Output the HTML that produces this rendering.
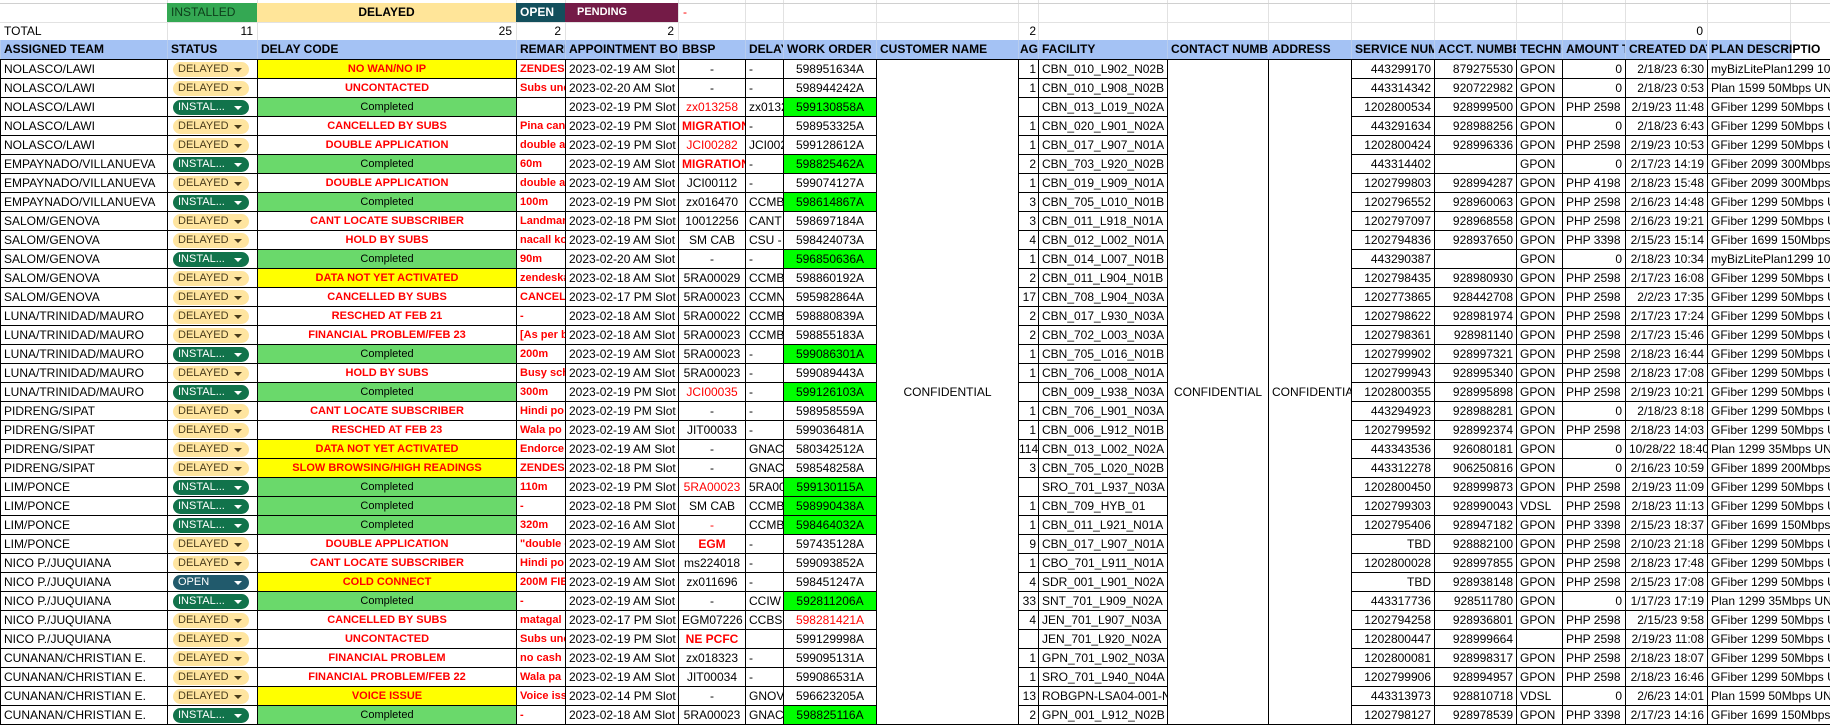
<!DOCTYPE html>
<html><head><meta charset="utf-8">
<style>
*{box-sizing:border-box}
body{margin:0;width:1830px;height:720px;overflow:hidden;background:#fff;font-family:"Liberation Sans",Arial,sans-serif;font-size:12px;color:#000;position:relative}
.top{position:absolute;left:0;top:0;width:1830px;height:40px}
.tc{position:absolute;height:19px;line-height:19px;font-size:12px;padding:0 4px;white-space:nowrap;overflow:hidden}
.vl{position:absolute;top:0;width:1px;height:40px;background:#e2e2e2}
table{position:absolute;left:0;top:40px;border-collapse:collapse;table-layout:fixed;width:1830px}
tr{height:19px}
td{border:1px solid #000;padding:0 3px;white-space:nowrap;overflow:hidden;line-height:16px;font-size:12px;height:19px}
tr.h td{background:#a4c2f4;font-weight:bold;font-size:12px;border-left:1px solid #b8cdee;border-right:1px solid #b8cdee;border-top:none;border-bottom:1px solid #000;height:18px;padding:0 3px}
.c{text-align:center}.n{text-align:right}
.dc{text-align:center;color:#f00;font-weight:bold;font-size:11px}
.y{background:#ffff00}
.g{background:#6ad96b;color:#000;font-weight:normal;font-size:11px}
.rm{color:#f00;font-weight:bold;font-size:11px}
.rd{color:#f00}
.bg{background:#00ff00}
.ch{display:inline-block;width:76px;height:15px;line-height:15px;border-radius:8px;font-size:11px;padding-left:5px;position:relative;vertical-align:middle;margin-left:5px;letter-spacing:0}
.ch:after{content:"";position:absolute;right:7px;top:6px;border-left:4px solid transparent;border-right:4px solid transparent;border-top:4px solid currentColor}
.D{background:#ffe5a0;color:#4a3c1c}
.I{background:#11734b;color:#fff}
.O{background:#215a6c;color:#fff}
td.s{padding:0}
td.m{text-align:center;vertical-align:middle;border-top:1px solid #000}
</style></head><body>
<div class="top">
<div class="vl" style="left:167px"></div><div class="vl" style="left:257px"></div><div class="vl" style="left:516px"></div><div class="vl" style="left:565px"></div><div class="vl" style="left:678px"></div><div class="vl" style="left:745px"></div><div class="vl" style="left:783px"></div><div class="vl" style="left:876px"></div><div class="vl" style="left:1018px"></div><div class="vl" style="left:1038px"></div><div class="vl" style="left:1167px"></div><div class="vl" style="left:1268px"></div><div class="vl" style="left:1351px"></div><div class="vl" style="left:1434px"></div><div class="vl" style="left:1516px"></div><div class="vl" style="left:1562px"></div><div class="vl" style="left:1625px"></div><div class="vl" style="left:1707px"></div><div class="vl" style="left:1790px"></div>
<div style="position:absolute;left:0;top:3px;width:1830px;height:1px;background:#d0d0d0"></div>
<div style="position:absolute;left:0;top:22px;width:1830px;height:1px;background:#e2e2e2"></div>
<div class="tc" style="left:167px;top:3px;width:90px;background:#34a853;color:#0d3d1a">INSTALLED</div>
<div class="tc" style="left:257px;top:3px;width:259px;background:#ffe599;text-align:center;font-weight:bold">DELAYED</div>
<div class="tc" style="left:516px;top:3px;width:49px;background:#134f5c;color:#fff;font-weight:bold">OPEN</div>
<div class="tc" style="left:565px;top:3px;width:113px;background:#741b47;color:#fff;font-weight:bold;font-size:11px;padding-left:12px">PENDING</div>
<div class="tc" style="left:679px;top:3px;color:#f00">-</div>
<div class="tc" style="left:0;top:22px;">TOTAL</div>
<div class="tc" style="left:167px;top:22px;width:90px;text-align:right">11</div>
<div class="tc" style="left:257px;top:22px;width:259px;text-align:right">25</div>
<div class="tc" style="left:516px;top:22px;width:49px;text-align:right">2</div>
<div class="tc" style="left:565px;top:22px;width:113px;text-align:right">2</div>
<div class="tc" style="left:1018px;top:22px;width:20px;text-align:right;padding:0 2px">2</div>
<div class="tc" style="left:1625px;top:22px;width:82px;text-align:right">0</div>
</div>
<table>
<colgroup><col style="width:167px"><col style="width:90px"><col style="width:259px"><col style="width:49px"><col style="width:113px"><col style="width:67px"><col style="width:38px"><col style="width:93px"><col style="width:142px"><col style="width:20px"><col style="width:129px"><col style="width:101px"><col style="width:83px"><col style="width:83px"><col style="width:82px"><col style="width:46px"><col style="width:63px"><col style="width:82px"><col style="width:123px"></colgroup>
<tr class="h"><td>ASSIGNED TEAM</td><td>STATUS</td><td>DELAY CODE</td><td>REMARKS</td><td>APPOINTMENT BOOKED</td><td>BBSP</td><td>DELAY</td><td>WORK ORDER</td><td>CUSTOMER NAME</td><td style="padding:0 1px">AG</td><td>FACILITY</td><td>CONTACT NUMBER</td><td>ADDRESS</td><td>SERVICE NUMBER</td><td>ACCT. NUMBER</td><td>TECHNOLOGY</td><td>AMOUNT TO</td><td>CREATED DATE</td><td style="background:linear-gradient(to right,#a4c2f4 83px,#fff 83px);border-right:none">PLAN DESCRIPTIO</td></tr>
<tr><td>NOLASCO/LAWI</td><td class="s"><span class="ch D">DELAYED</span></td><td class="dc y">NO WAN/NO IP</td><td class="rm">ZENDESK</td><td>2023-02-19 AM Slot</td><td class="c">-</td><td>-</td><td class="c">598951634A</td><td class="m" rowspan="35">CONFIDENTIAL</td><td class="n" style="padding:0 2px">1</td><td>CBN_010_L902_N02B</td><td class="m" rowspan="35">CONFIDENTIAL</td><td class="m" rowspan="35">CONFIDENTIAL</td><td class="n">443299170</td><td class="n">879275530</td><td>GPON</td><td class="n">0</td><td class="n">2/18/23 6:30</td><td>myBizLitePlan1299 10Mbps</td></tr>
<tr><td>NOLASCO/LAWI</td><td class="s"><span class="ch D">DELAYED</span></td><td class="dc">UNCONTACTED</td><td class="rm">Subs unc</td><td>2023-02-20 AM Slot</td><td class="c">-</td><td>-</td><td class="c">598944242A</td><td class="n" style="padding:0 2px">1</td><td>CBN_010_L908_N02B</td><td class="n">443314342</td><td class="n">920722982</td><td>GPON</td><td class="n">0</td><td class="n">2/18/23 0:53</td><td>Plan 1599 50Mbps UNLI</td></tr>
<tr><td>NOLASCO/LAWI</td><td class="s"><span class="ch I">INSTAL...</span></td><td class="dc g">Completed</td><td class="rm"></td><td>2023-02-19 PM Slot</td><td class="c rd">zx013258</td><td>zx013258</td><td class="c bg">599130858A</td><td class="n"></td><td>CBN_013_L019_N02A</td><td class="n">1202800534</td><td class="n">928999500</td><td>GPON</td><td>PHP 2598</td><td class="n">2/19/23 11:48</td><td>GFiber 1299 50Mbps UNLI</td></tr>
<tr><td>NOLASCO/LAWI</td><td class="s"><span class="ch D">DELAYED</span></td><td class="dc">CANCELLED BY SUBS</td><td class="rm">Pina cancel</td><td>2023-02-19 PM Slot</td><td class="c rd" style="font-weight:bold">MIGRATION</td><td>-</td><td class="c">598953325A</td><td class="n" style="padding:0 2px">1</td><td>CBN_020_L901_N02A</td><td class="n">443291634</td><td class="n">928988256</td><td>GPON</td><td class="n">0</td><td class="n">2/18/23 6:43</td><td>GFiber 1299 50Mbps UNLI</td></tr>
<tr><td>NOLASCO/LAWI</td><td class="s"><span class="ch D">DELAYED</span></td><td class="dc">DOUBLE APPLICATION</td><td class="rm">double ap</td><td>2023-02-19 PM Slot</td><td class="c rd">JCI00282</td><td>JCI00282</td><td class="c">599128612A</td><td class="n" style="padding:0 2px">1</td><td>CBN_017_L907_N01A</td><td class="n">1202800424</td><td class="n">928996336</td><td>GPON</td><td>PHP 2598</td><td class="n">2/19/23 10:53</td><td>GFiber 1299 50Mbps UNLI</td></tr>
<tr><td>EMPAYNADO/VILLANUEVA</td><td class="s"><span class="ch I">INSTAL...</span></td><td class="dc g">Completed</td><td class="rm">60m</td><td>2023-02-19 AM Slot</td><td class="c rd" style="font-weight:bold">MIGRATION</td><td>-</td><td class="c bg">598825462A</td><td class="n" style="padding:0 2px">2</td><td>CBN_703_L920_N02B</td><td class="n">443314402</td><td class="n"></td><td>GPON</td><td class="n">0</td><td class="n">2/17/23 14:19</td><td>GFiber 2099 300Mbps</td></tr>
<tr><td>EMPAYNADO/VILLANUEVA</td><td class="s"><span class="ch D">DELAYED</span></td><td class="dc">DOUBLE APPLICATION</td><td class="rm">double ap</td><td>2023-02-19 AM Slot</td><td class="c">JCI00112</td><td>-</td><td class="c">599074127A</td><td class="n" style="padding:0 2px">1</td><td>CBN_019_L909_N01A</td><td class="n">1202799803</td><td class="n">928994287</td><td>GPON</td><td>PHP 4198</td><td class="n">2/18/23 15:48</td><td>GFiber 2099 300Mbps</td></tr>
<tr><td>EMPAYNADO/VILLANUEVA</td><td class="s"><span class="ch I">INSTAL...</span></td><td class="dc g">Completed</td><td class="rm">100m</td><td>2023-02-19 PM Slot</td><td class="c">zx016470</td><td>CCMBS</td><td class="c bg">598614867A</td><td class="n" style="padding:0 2px">3</td><td>CBN_705_L010_N01B</td><td class="n">1202796552</td><td class="n">928960063</td><td>GPON</td><td>PHP 2598</td><td class="n">2/16/23 14:48</td><td>GFiber 1299 50Mbps UNLI</td></tr>
<tr><td>SALOM/GENOVA</td><td class="s"><span class="ch D">DELAYED</span></td><td class="dc">CANT LOCATE SUBSCRIBER</td><td class="rm">Landmark</td><td>2023-02-18 PM Slot</td><td class="c">10012256</td><td>CANT L</td><td class="c">598697184A</td><td class="n" style="padding:0 2px">3</td><td>CBN_011_L918_N01A</td><td class="n">1202797097</td><td class="n">928968558</td><td>GPON</td><td>PHP 2598</td><td class="n">2/16/23 19:21</td><td>GFiber 1299 50Mbps UNLI</td></tr>
<tr><td>SALOM/GENOVA</td><td class="s"><span class="ch D">DELAYED</span></td><td class="dc">HOLD BY SUBS</td><td class="rm">nacall ko</td><td>2023-02-19 AM Slot</td><td class="c">SM CAB</td><td>CSU -</td><td class="c">598424073A</td><td class="n" style="padding:0 2px">4</td><td>CBN_012_L002_N01A</td><td class="n">1202794836</td><td class="n">928937650</td><td>GPON</td><td>PHP 3398</td><td class="n">2/15/23 15:14</td><td>GFiber 1699 150Mbps</td></tr>
<tr><td>SALOM/GENOVA</td><td class="s"><span class="ch I">INSTAL...</span></td><td class="dc g">Completed</td><td class="rm">90m</td><td>2023-02-20 AM Slot</td><td class="c">-</td><td>-</td><td class="c bg">596850636A</td><td class="n" style="padding:0 2px">1</td><td>CBN_014_L007_N01B</td><td class="n">443290387</td><td class="n"></td><td>GPON</td><td class="n">0</td><td class="n">2/18/23 10:34</td><td>myBizLitePlan1299 10M</td></tr>
<tr><td>SALOM/GENOVA</td><td class="s"><span class="ch D">DELAYED</span></td><td class="dc y">DATA NOT YET ACTIVATED</td><td class="rm">zendesk#</td><td>2023-02-18 AM Slot</td><td class="c">5RA00029</td><td>CCMBS</td><td class="c">598860192A</td><td class="n" style="padding:0 2px">2</td><td>CBN_011_L904_N01B</td><td class="n">1202798435</td><td class="n">928980930</td><td>GPON</td><td>PHP 2598</td><td class="n">2/17/23 16:08</td><td>GFiber 1299 50Mbps UNLI</td></tr>
<tr><td>SALOM/GENOVA</td><td class="s"><span class="ch D">DELAYED</span></td><td class="dc">CANCELLED BY SUBS</td><td class="rm">CANCELLED</td><td>2023-02-17 PM Slot</td><td class="c">5RA00023</td><td>CCMN</td><td class="c">595982864A</td><td class="n" style="padding:0 2px">17</td><td>CBN_708_L904_N03A</td><td class="n">1202773865</td><td class="n">928442708</td><td>GPON</td><td>PHP 2598</td><td class="n">2/2/23 17:35</td><td>GFiber 1299 50Mbps UNLI</td></tr>
<tr><td>LUNA/TRINIDAD/MAURO</td><td class="s"><span class="ch D">DELAYED</span></td><td class="dc">RESCHED AT FEB 21</td><td class="rm">-</td><td>2023-02-18 AM Slot</td><td class="c">5RA00022</td><td>CCMBS</td><td class="c">598880839A</td><td class="n" style="padding:0 2px">2</td><td>CBN_017_L930_N03A</td><td class="n">1202798622</td><td class="n">928981974</td><td>GPON</td><td>PHP 2598</td><td class="n">2/17/23 17:24</td><td>GFiber 1299 50Mbps UNLI</td></tr>
<tr><td>LUNA/TRINIDAD/MAURO</td><td class="s"><span class="ch D">DELAYED</span></td><td class="dc">FINANCIAL PROBLEM/FEB 23</td><td class="rm">[As per b</td><td>2023-02-18 AM Slot</td><td class="c">5RA00023</td><td>CCMBS</td><td class="c">598855183A</td><td class="n" style="padding:0 2px">2</td><td>CBN_702_L003_N03A</td><td class="n">1202798361</td><td class="n">928981140</td><td>GPON</td><td>PHP 2598</td><td class="n">2/17/23 15:46</td><td>GFiber 1299 50Mbps UNLI</td></tr>
<tr><td>LUNA/TRINIDAD/MAURO</td><td class="s"><span class="ch I">INSTAL...</span></td><td class="dc g">Completed</td><td class="rm">200m</td><td>2023-02-19 AM Slot</td><td class="c">5RA00023</td><td>-</td><td class="c bg">599086301A</td><td class="n" style="padding:0 2px">1</td><td>CBN_705_L016_N01B</td><td class="n">1202799902</td><td class="n">928997321</td><td>GPON</td><td>PHP 2598</td><td class="n">2/18/23 16:44</td><td>GFiber 1299 50Mbps UNLI</td></tr>
<tr><td>LUNA/TRINIDAD/MAURO</td><td class="s"><span class="ch D">DELAYED</span></td><td class="dc">HOLD BY SUBS</td><td class="rm">Busy sche</td><td>2023-02-19 AM Slot</td><td class="c">5RA00023</td><td>-</td><td class="c">599089443A</td><td class="n" style="padding:0 2px">1</td><td>CBN_706_L008_N01A</td><td class="n">1202799943</td><td class="n">928995340</td><td>GPON</td><td>PHP 2598</td><td class="n">2/18/23 17:08</td><td>GFiber 1299 50Mbps UNLI</td></tr>
<tr><td>LUNA/TRINIDAD/MAURO</td><td class="s"><span class="ch I">INSTAL...</span></td><td class="dc g">Completed</td><td class="rm">300m</td><td>2023-02-19 PM Slot</td><td class="c rd">JCI00035</td><td>-</td><td class="c bg">599126103A</td><td class="n"></td><td>CBN_009_L938_N03A</td><td class="n">1202800355</td><td class="n">928995898</td><td>GPON</td><td>PHP 2598</td><td class="n">2/19/23 10:21</td><td>GFiber 1299 50Mbps UNLI</td></tr>
<tr><td>PIDRENG/SIPAT</td><td class="s"><span class="ch D">DELAYED</span></td><td class="dc">CANT LOCATE SUBSCRIBER</td><td class="rm">Hindi po</td><td>2023-02-19 PM Slot</td><td class="c">-</td><td>-</td><td class="c">598958559A</td><td class="n" style="padding:0 2px">1</td><td>CBN_706_L901_N03A</td><td class="n">443294923</td><td class="n">928988281</td><td>GPON</td><td class="n">0</td><td class="n">2/18/23 8:18</td><td>GFiber 1299 50Mbps UNLI</td></tr>
<tr><td>PIDRENG/SIPAT</td><td class="s"><span class="ch D">DELAYED</span></td><td class="dc">RESCHED AT FEB 23</td><td class="rm">Wala po</td><td>2023-02-19 AM Slot</td><td class="c">JIT00033</td><td>-</td><td class="c">599036481A</td><td class="n" style="padding:0 2px">1</td><td>CBN_006_L912_N01B</td><td class="n">1202799592</td><td class="n">928992374</td><td>GPON</td><td>PHP 2598</td><td class="n">2/18/23 14:03</td><td>GFiber 1299 50Mbps UNLI</td></tr>
<tr><td>PIDRENG/SIPAT</td><td class="s"><span class="ch D">DELAYED</span></td><td class="dc y">DATA NOT YET ACTIVATED</td><td class="rm">Endorce t</td><td>2023-02-19 AM Slot</td><td class="c">-</td><td>GNACT</td><td class="c">580342512A</td><td class="n" style="padding:0">114</td><td>CBN_013_L002_N02A</td><td class="n">443343536</td><td class="n">926080181</td><td>GPON</td><td class="n">0</td><td class="n">10/28/22 18:40</td><td>Plan 1299 35Mbps UNLI</td></tr>
<tr><td>PIDRENG/SIPAT</td><td class="s"><span class="ch D">DELAYED</span></td><td class="dc y">SLOW BROWSING/HIGH READINGS</td><td class="rm">ZENDESK</td><td>2023-02-18 PM Slot</td><td class="c">-</td><td>GNACT</td><td class="c">598548258A</td><td class="n" style="padding:0 2px">3</td><td>CBN_705_L020_N02B</td><td class="n">443312278</td><td class="n">906250816</td><td>GPON</td><td class="n">0</td><td class="n">2/16/23 10:59</td><td>GFiber 1899 200Mbps</td></tr>
<tr><td>LIM/PONCE</td><td class="s"><span class="ch I">INSTAL...</span></td><td class="dc g">Completed</td><td class="rm">110m</td><td>2023-02-19 PM Slot</td><td class="c rd">5RA00023</td><td>5RA00023</td><td class="c bg">599130115A</td><td class="n"></td><td>SRO_701_L937_N03A</td><td class="n">1202800450</td><td class="n">928999873</td><td>GPON</td><td>PHP 2598</td><td class="n">2/19/23 11:09</td><td>GFiber 1299 50Mbps UNLI</td></tr>
<tr><td>LIM/PONCE</td><td class="s"><span class="ch I">INSTAL...</span></td><td class="dc g">Completed</td><td class="rm">-</td><td>2023-02-18 PM Slot</td><td class="c">SM CAB</td><td>CCMBS</td><td class="c bg">598990438A</td><td class="n" style="padding:0 2px">1</td><td>CBN_709_HYB_01</td><td class="n">1202799303</td><td class="n">928990043</td><td>VDSL</td><td>PHP 2598</td><td class="n">2/18/23 11:13</td><td>GFiber 1299 50Mbps UNLI</td></tr>
<tr><td>LIM/PONCE</td><td class="s"><span class="ch I">INSTAL...</span></td><td class="dc g">Completed</td><td class="rm">320m</td><td>2023-02-16 AM Slot</td><td class="c rd">-</td><td>CCMBS</td><td class="c bg">598464032A</td><td class="n" style="padding:0 2px">1</td><td>CBN_011_L921_N01A</td><td class="n">1202795406</td><td class="n">928947182</td><td>GPON</td><td>PHP 3398</td><td class="n">2/15/23 18:37</td><td>GFiber 1699 150Mbps</td></tr>
<tr><td>LIM/PONCE</td><td class="s"><span class="ch D">DELAYED</span></td><td class="dc">DOUBLE APPLICATION</td><td class="rm">"double c</td><td>2023-02-19 AM Slot</td><td class="c rd" style="font-weight:bold">EGM</td><td>-</td><td class="c">597435128A</td><td class="n" style="padding:0 2px">9</td><td>CBN_017_L907_N01A</td><td class="n">TBD</td><td class="n">928882100</td><td>GPON</td><td>PHP 2598</td><td class="n">2/10/23 21:18</td><td>GFiber 1299 50Mbps UNLI</td></tr>
<tr><td>NICO P./JUQUIANA</td><td class="s"><span class="ch D">DELAYED</span></td><td class="dc">CANT LOCATE SUBSCRIBER</td><td class="rm">Hindi po</td><td>2023-02-19 AM Slot</td><td class="c">ms224018</td><td>-</td><td class="c">599093852A</td><td class="n" style="padding:0 2px">1</td><td>CBO_701_L911_N01A</td><td class="n">1202800028</td><td class="n">928997855</td><td>GPON</td><td>PHP 2598</td><td class="n">2/18/23 17:48</td><td>GFiber 1299 50Mbps UNLI</td></tr>
<tr><td>NICO P./JUQUIANA</td><td class="s"><span class="ch O">OPEN</span></td><td class="dc y">COLD CONNECT</td><td class="rm">200M FIB</td><td>2023-02-19 AM Slot</td><td class="c">zx011696</td><td>-</td><td class="c">598451247A</td><td class="n" style="padding:0 2px">4</td><td>SDR_001_L901_N02A</td><td class="n">TBD</td><td class="n">928938148</td><td>GPON</td><td>PHP 2598</td><td class="n">2/15/23 17:08</td><td>GFiber 1299 50Mbps UNLI</td></tr>
<tr><td>NICO P./JUQUIANA</td><td class="s"><span class="ch I">INSTAL...</span></td><td class="dc g">Completed</td><td class="rm">-</td><td>2023-02-19 AM Slot</td><td class="c">-</td><td>CCIW -</td><td class="c bg">592811206A</td><td class="n" style="padding:0 2px">33</td><td>SNT_701_L909_N02A</td><td class="n">443317736</td><td class="n">928511780</td><td>GPON</td><td class="n">0</td><td class="n">1/17/23 17:19</td><td>Plan 1299 35Mbps UNLI</td></tr>
<tr><td>NICO P./JUQUIANA</td><td class="s"><span class="ch D">DELAYED</span></td><td class="dc">CANCELLED BY SUBS</td><td class="rm">matagal</td><td>2023-02-17 PM Slot</td><td class="c">EGM07226</td><td>CCBS-S</td><td class="c rd">598281421A</td><td class="n" style="padding:0 2px">4</td><td>JEN_701_L907_N03A</td><td class="n">1202794258</td><td class="n">928936801</td><td>GPON</td><td>PHP 2598</td><td class="n">2/15/23 9:58</td><td>GFiber 1299 50Mbps UNLI</td></tr>
<tr><td>NICO P./JUQUIANA</td><td class="s"><span class="ch D">DELAYED</span></td><td class="dc">UNCONTACTED</td><td class="rm">Subs unc</td><td>2023-02-19 PM Slot</td><td class="c rd" style="font-weight:bold">NE PCFC</td><td></td><td class="c">599129998A</td><td class="n"></td><td>JEN_701_L920_N02A</td><td class="n">1202800447</td><td class="n">928999664</td><td></td><td>PHP 2598</td><td class="n">2/19/23 11:08</td><td>GFiber 1299 50Mbps UNLI</td></tr>
<tr><td>CUNANAN/CHRISTIAN E.</td><td class="s"><span class="ch D">DELAYED</span></td><td class="dc">FINANCIAL PROBLEM</td><td class="rm">no cash c</td><td>2023-02-19 AM Slot</td><td class="c">zx018323</td><td>-</td><td class="c">599095131A</td><td class="n" style="padding:0 2px">1</td><td>GPN_701_L902_N03A</td><td class="n">1202800081</td><td class="n">928998317</td><td>GPON</td><td>PHP 2598</td><td class="n">2/18/23 18:07</td><td>GFiber 1299 50Mbps UNLI</td></tr>
<tr><td>CUNANAN/CHRISTIAN E.</td><td class="s"><span class="ch D">DELAYED</span></td><td class="dc">FINANCIAL PROBLEM/FEB 22</td><td class="rm">Wala pa</td><td>2023-02-19 AM Slot</td><td class="c">JIT00034</td><td>-</td><td class="c">599086531A</td><td class="n" style="padding:0 2px">1</td><td>SRO_701_L940_N04A</td><td class="n">1202799906</td><td class="n">928994957</td><td>GPON</td><td>PHP 2598</td><td class="n">2/18/23 16:46</td><td>GFiber 1299 50Mbps UNLI</td></tr>
<tr><td>CUNANAN/CHRISTIAN E.</td><td class="s"><span class="ch D">DELAYED</span></td><td class="dc y">VOICE ISSUE</td><td class="rm">Voice issue</td><td>2023-02-14 PM Slot</td><td class="c">-</td><td>GNOVC</td><td class="c">596623205A</td><td class="n" style="padding:0 2px">13</td><td>ROBGPN-LSA04-001-NL36</td><td class="n">443313973</td><td class="n">928810718</td><td>VDSL</td><td class="n">0</td><td class="n">2/6/23 14:01</td><td>Plan 1599 50Mbps UNLI</td></tr>
<tr><td>CUNANAN/CHRISTIAN E.</td><td class="s"><span class="ch I">INSTAL...</span></td><td class="dc g">Completed</td><td class="rm">-</td><td>2023-02-18 AM Slot</td><td class="c">5RA00023</td><td>GNACT</td><td class="c bg">598825116A</td><td class="n" style="padding:0 2px">2</td><td>GPN_001_L912_N02B</td><td class="n">1202798127</td><td class="n">928978539</td><td>GPON</td><td>PHP 3398</td><td class="n">2/17/23 14:16</td><td>GFiber 1699 150Mbps</td></tr>
</table>
</body></html>
